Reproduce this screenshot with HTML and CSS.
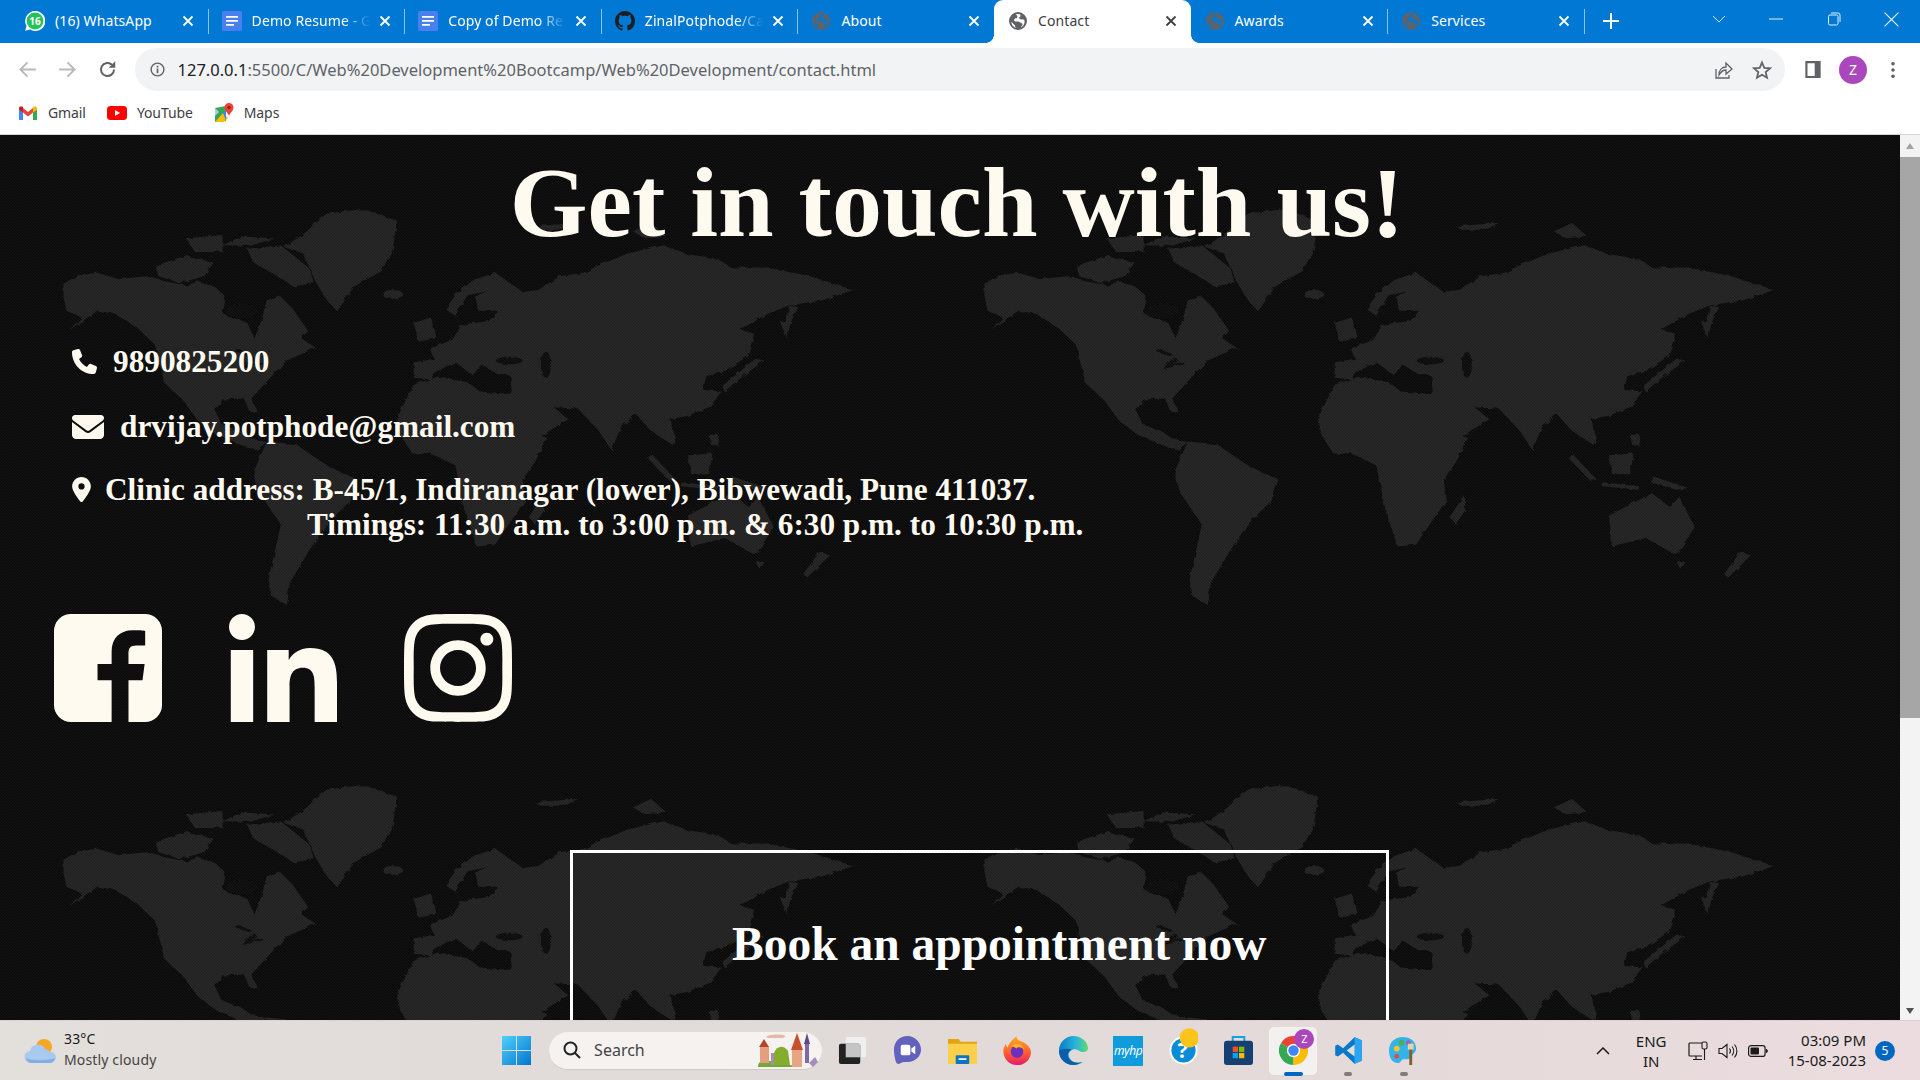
FILE: index.html
```html
<!DOCTYPE html>
<html lang="en">
<head>
<meta charset="utf-8">
<title>Contact</title>
<link rel="stylesheet" href="styles.css">
</head>
<body>
<svg class="defs" width="0" height="0" aria-hidden="true">
  <symbol id="globe" viewBox="0 0 16 16"><path fill-rule="evenodd" d="M8 0a8 8 0 1 0 0 16A8 8 0 0 0 8 0zM2 8.6 5.4 12v1l1.4 1.3A6.400 6.400 0 0 1 2 8.600zM10.700 13.800l.1-.800 1.200-1.500V10.500L8.500 8.500H5.600L4.300 7.300 5.500 5.500h1.600L7.500 3.500 6 2.100a6.400 6.400 0 0 1 4.100.1V4L8.700 5.200l1.200 1.300 3 .1.900 1A6.400 6.400 0 0 1 10.700 13.800z"/></symbol>
  <symbol id="tabx" viewBox="0 0 12 12"><path d="M1.500 1.500l9 9M10.500 1.500l-9 9" fill="none" stroke="currentColor" stroke-width="1.800"/></symbol>
  <symbol id="doc" viewBox="0 0 20 20"><rect width="20" height="20" rx="2" fill="#4a80ee"/><path d="M4 5h12v1.800H4zM4 9h12v1.800H4zM4 13h8v1.800H4z" fill="#fff"/></symbol>
</svg>

<header class="tabbar">
  <div class="tab">
    <svg class="fav" viewBox="0 0 20 20"><path d="M10 0a10 10 0 0 0-8.500 15L.2 19.800l4.900-1.300A10 10 0 1 0 10 0z" fill="#fff"/><circle cx="10" cy="10" r="8.400" fill="#25c25a"/><text x="10" y="13.500" class="fav-num">16</text></svg>
    <span class="tab-title">(16) WhatsApp</span><svg class="tab-x"><use href="#tabx"/></svg>
  </div>
  <div class="tab">
    <svg class="fav"><use href="#doc"/></svg>
    <span class="tab-title fade">Demo Resume - G</span><svg class="tab-x"><use href="#tabx"/></svg>
  </div>
  <div class="tab">
    <svg class="fav"><use href="#doc"/></svg>
    <span class="tab-title fade">Copy of Demo Re</span><svg class="tab-x"><use href="#tabx"/></svg>
  </div>
  <div class="tab">
    <svg class="fav gh" viewBox="0 0 16 16"><path fill="#1b1f23" d="M8 0C3.580 0 0 3.580 0 8c0 3.540 2.290 6.530 5.470 7.590.4.070.550-.170.550-.380 0-.190-.010-.820-.010-1.490-2.010.370-2.530-.490-2.690-.940-.090-.230-.480-.940-.820-1.130-.280-.150-.680-.520-.010-.530.630-.010 1.080.580 1.230.820.720 1.210 1.870.870 2.330.660.070-.520.280-.870.510-1.070-1.780-.2-3.640-.890-3.640-3.950 0-.870.310-1.590.820-2.150-.08-.2-.36-1.020.08-2.120 0 0 .670-.210 2.200.820.640-.180 1.320-.270 2-.270.680 0 1.360.090 2 .270 1.530-1.040 2.200-.820 2.200-.820.440 1.100.160 1.920.08 2.120.510.560.820 1.270.820 2.150 0 3.070-1.870 3.750-3.650 3.950.290.250.540.730.540 1.480 0 1.070-.010 1.930-.010 2.200 0 .210.150.460.550.380A8.013 8.013 0 0 0 16 8c0-4.420-3.580-8-8-8z"/></svg>
    <span class="tab-title fade">ZinalPotphode/Ca</span><svg class="tab-x"><use href="#tabx"/></svg>
  </div>
  <div class="tab nosep">
    <svg class="fav grey"><use href="#globe"/></svg>
    <span class="tab-title">About</span><svg class="tab-x"><use href="#tabx"/></svg>
  </div>
  <div class="tab active nosep">
    <svg class="fav grey"><use href="#globe"/></svg>
    <span class="tab-title">Contact</span><svg class="tab-x"><use href="#tabx"/></svg>
  </div>
  <div class="tab">
    <svg class="fav grey"><use href="#globe"/></svg>
    <span class="tab-title">Awards</span><svg class="tab-x"><use href="#tabx"/></svg>
  </div>
  <div class="tab">
    <svg class="fav grey"><use href="#globe"/></svg>
    <span class="tab-title">Services</span><svg class="tab-x"><use href="#tabx"/></svg>
  </div>
  <svg class="newtab" viewBox="0 0 16 16"><path d="M8 0v16M0 8h16" stroke="#fff" stroke-width="2"/></svg>
  <div class="winctl">
    <div class="wbtn"><svg class="wicon" viewBox="0 0 14 14"><path d="M1 4l6 6 6-6" fill="none" stroke="#cfe4f7" stroke-width="1"/></svg></div>
    <div class="wbtn"><svg class="wicon" viewBox="0 0 14 14"><path d="M0 7h14" stroke="#e6f1fb" stroke-width="1"/></svg></div>
    <div class="wbtn"><svg class="wicon" viewBox="0 0 14 14"><rect x="1.500" y="3" width="9.500" height="10" rx="1.500" fill="none" stroke="#e6f1fb"/><path d="M4 1h7a2 2 0 0 1 2 2v7" fill="none" stroke="#e6f1fb" stroke-width="1"/></svg></div>
    <div class="wbtn"><svg class="wicon big" viewBox="0 0 14 14"><path d="M.5.500l13 13M13.500.500l-13 13" stroke="#f2f8fd" stroke-width="1"/></svg></div>
  </div>
</header>

<nav class="toolbar">
  <div class="navbtn"><svg class="navicon" viewBox="0 0 16 16"><path d="M15 8H2M8 2 2 8l6 6" fill="none" stroke="#b7b9bc" stroke-width="1.600"/></svg></div>
  <div class="navbtn"><svg class="navicon" viewBox="0 0 16 16"><path d="M1 8h13M8 2l6 6-6 6" fill="none" stroke="#b7b9bc" stroke-width="1.600"/></svg></div>
  <div class="navbtn"><svg class="navicon" viewBox="0 0 16 16"><path d="M13.500 8a5.500 5.500 0 1 1-1.700-4" fill="none" stroke="#5f6368" stroke-width="1.700"/><path d="M14.500 1v5.500H9z" fill="#5f6368"/></svg></div>
  <div class="addr">
    <svg class="info" viewBox="0 0 16 16"><circle cx="8" cy="8" r="6.800" fill="none" stroke="#5f6368" stroke-width="1.500"/><path d="M7.100 7h1.800v5H7.100zM7.100 4h1.800v1.800H7.100z" fill="#5f6368"/></svg>
    <span class="url"><span class="host">127.0.0.1</span>:5500/C/Web%20Development%20Bootcamp/Web%20Development/contact.html</span>
    <svg class="addr-ic share" viewBox="0 0 20 20"><path d="M3 9v9h13v-3" fill="none" stroke="#5f6368" stroke-width="1.300"/><path d="M6 15c0-5 3-8 7-8V3l6 6-6 5v-4c-3 0-5 1.500-7 5z" fill="none" stroke="#5f6368" stroke-width="1.300"/></svg>
    <svg class="addr-ic star" viewBox="0 0 20 20"><path d="M10 2.500l2.300 5.300 5.700.5-4.300 3.800 1.300 5.600L10 14.800l-5 2.900 1.300-5.600L2 8.300l5.700-.5z" fill="none" stroke="#5f6368" stroke-width="1.800"/></svg>
  </div>
  <div class="tools">
    <div class="navbtn"><svg class="panel" viewBox="0 0 18 20"><path fill-rule="evenodd" d="M0 0h18v20H0zM2.500 2.500v15H11v-15z" fill="#5f6368"/></svg></div>
    <div class="navbtn"><span class="avatar">Z</span></div>
    <div class="navbtn"><svg class="dots" viewBox="0 0 6 20"><circle cx="3" cy="3" r="2" fill="#5f6368"/><circle cx="3" cy="10" r="2" fill="#5f6368"/><circle cx="3" cy="17" r="2" fill="#5f6368"/></svg></div>
  </div>
</nav>

<div class="bookmarks">
  <a class="bm">
    <svg class="bm-ic gm" viewBox="0 0 18 14"><path d="M0 2.500V14h4V6z" fill="#4285f4"/><path d="M18 2.500V14h-4V6z" fill="#34a853"/><path d="M4 2 9 6l5-4v4.500L9 10.500 4 6.500z" fill="#ea4335"/><path d="M0 2.500C0 .500 2.300-.500 4 1v5.500L0 3.500z" fill="#c5221f"/><path d="M18 2.500C18 .500 15.700-.500 14 1v5.500l4-3z" fill="#fbbc04"/></svg>
    <span>Gmail</span>
  </a>
  <a class="bm">
    <svg class="bm-ic yt" viewBox="0 0 20 14"><rect width="20" height="14" rx="3.500" fill="#f00"/><path d="M8 4l5.200 3L8 10z" fill="#fff"/></svg>
    <span>YouTube</span>
  </a>
  <a class="bm">
    <svg class="bm-ic mp" viewBox="0 0 20 20"><path d="M1 5l11-2v15L1 19z" fill="#34a853"/><path d="M1 19 9 10l5 5-4 4z" fill="#fbbc04"/><path d="M9 10l3-3v11z" fill="#4285f4"/><path d="M1 5l4 4-4 4z" fill="#aecbfa"/><path d="M15 0a4.500 4.500 0 0 0-4.500 4.500c0 3 3 5 4.500 8 1.500-3 4.500-5 4.500-8A4.500 4.500 0 0 0 15 0z" fill="#ea4335"/><circle cx="15" cy="4.500" r="1.600" fill="#a50e0e"/></svg>
    <span>Maps</span>
  </a>
</div>

<div class="viewport">
  <main class="page">
    <h1 class="headline">Get in touch with us!</h1>
    <section class="contacts">
      <p class="line phone-line">
        <svg class="ic-phone" viewBox="0 0 512 512"><path d="M164.900 24.600c-7.700-18.600-28-28.500-47.400-23.200l-88 24C12.100 30.200 0 46 0 64C0 311.400 200.600 512 448 512c18 0 33.800-12.100 38.600-29.500l24-88c5.300-19.400-4.600-39.700-23.200-47.400l-96-40c-16.300-6.800-35.200-2.100-46.300 11.600L304.700 368C234.300 334.700 177.300 277.700 144 207.300L193.300 167c13.700-11.200 18.400-30 11.600-46.300l-40-96z"/></svg>
        <span>9890825200</span>
      </p>
      <p class="line mail-line">
        <svg class="ic-mail" viewBox="0 64 512 384"><path d="M48 64C21.500 64 0 85.500 0 112c0 15.100 7.100 29.300 19.200 38.400L236.800 313.600c11.400 8.500 27 8.500 38.400 0L492.800 150.400c12.100-9.100 19.200-23.300 19.200-38.400c0-26.500-21.500-48-48-48H48zM0 176V384c0 35.300 28.700 64 64 64H448c35.300 0 64-28.700 64-64V176L294.400 339.200c-22.800 17.100-54 17.100-76.800 0L0 176z"/></svg>
        <span>drvijay.potphode@gmail.com</span>
      </p>
      <p class="line addr-line">
        <svg class="ic-pin" viewBox="0 0 384 512"><path d="M215.700 499.200C267 435 384 279.400 384 192C384 86 298 0 192 0S0 86 0 192c0 87.400 117 243 168.300 307.200c12.300 15.300 35.100 15.300 47.400 0zM192 128a64 64 0 1 1 0 128 64 64 0 1 1 0-128z"/></svg>
        <span>Clinic address: B-45/1, Indiranagar (lower), Bibwewadi, Pune 411037.</span>
      </p>
      <p class="line timing">Timings: 11:30 a.m. to 3:00 p.m. &amp; 6:30 p.m. to 10:30 p.m.</p>
    </section>
    <section class="socials">
      <svg class="social" viewBox="0 32 448 448"><path d="M70 32H378a70 70 0 0 1 70 70V410a70 70 0 0 1-70 70H309V306.500h58.200l8.700-67.600h-67v-43.200c0-19.600 5.400-32.900 33.500-32.900h35.800v-60.500c-6.200-.8-27.400-2.700-52.200-2.700-51.600 0-87 31.500-87 89.400v49.900h-58.400v67.600h58.400V480H70a70 70 0 0 1-70-70V102a70 70 0 0 1 70-70z"/></svg>
      <svg class="social" viewBox="0 0 448 448"><path d="M100.280 448H7.400V148.900h92.880zM53.790 108.100C24.090 108.100 0 83.500 0 53.800a53.790 53.790 0 0 1 107.580 0c0 29.700-24.100 54.300-53.790 54.300zM447.900 448h-92.680V302.400c0-34.700-.7-79.200-48.290-79.200-48.290 0-55.690 37.700-55.690 76.700V448h-92.780V148.900h89.080v40.800h1.300c12.400-23.500 42.690-48.300 87.880-48.300 94 0 111.280 61.900 111.280 142.300V448z"/></svg>
      <svg class="social" viewBox="0 32 448 448"><path d="M224.100 141c-63.600 0-114.900 51.300-114.900 114.900s51.300 114.900 114.900 114.900S339 319.500 339 255.900 287.700 141 224.100 141zm0 189.600c-41.100 0-74.700-33.500-74.700-74.700s33.500-74.700 74.700-74.700 74.700 33.500 74.700 74.700-33.600 74.700-74.700 74.700zm146.400-194.300c0 14.900-12 26.800-26.800 26.800-14.900 0-26.800-12-26.800-26.800s12-26.800 26.800-26.800 26.800 12 26.800 26.800zm76.100 27.200c-1.700-35.900-9.900-67.700-36.200-93.900-26.200-26.200-58-34.400-93.900-36.200-37-2.100-147.900-2.100-184.900 0-35.800 1.700-67.600 9.900-93.900 36.100s-34.400 58-36.200 93.900c-2.100 37-2.100 147.900 0 184.900 1.700 35.900 9.900 67.700 36.200 93.900s58 34.400 93.900 36.200c37 2.100 147.900 2.100 184.900 0 35.900-1.700 67.700-9.900 93.900-36.200 26.200-26.200 34.400-58 36.200-93.900 2.100-37 2.100-147.800 0-184.800zM398.800 388c-7.800 19.600-22.900 34.700-42.600 42.600-29.500 11.700-99.500 9-132.100 9s-102.700 2.600-132.100-9c-19.600-7.800-34.700-22.900-42.600-42.600-11.700-29.500-9-99.500-9-132.100s-2.600-102.700 9-132.100c7.800-19.600 22.900-34.700 42.600-42.600 29.500-11.700 99.500-9 132.100-9s102.700-2.600 132.100 9c19.600 7.800 34.700 22.900 42.600 42.600 11.700 29.500 9 99.500 9 132.100s2.700 102.700-9 132.100z"/></svg>
    </section>
    <section class="appt">
      <h2 class="appt-title">Book an appointment now</h2>
    </section>
  </main>
  <aside class="scrollbar">
    <svg class="sb-arrow" viewBox="0 0 10 8"><path d="M5 1l4 6H1z" fill="#a3a3a3"/></svg>
    <div class="sb-track"><div class="sb-thumb"></div></div>
    <svg class="sb-arrow" viewBox="0 0 10 8"><path d="M5 7 9 1H1z" fill="#505050"/></svg>
  </aside>
</div>

<footer class="taskbar">
  <div class="weather">
    <svg class="wx" viewBox="0 0 32 26"><circle cx="20" cy="9" r="8" fill="#f7a823"/><path d="M7 25a6 6 0 0 1-1-12 8 8 0 0 1 15-2 6.500 6.500 0 0 1 5 3 5.500 5.500 0 0 1 1 11z" fill="#a9c9ee"/><path d="M2 20c6 3 20 3 29 0-1 3-3 5-5 5H7c-2 0-4-2-5-5z" fill="#7eaee2"/></svg>
    <div class="wx-text"><span class="wx-temp">33°C</span><span class="wx-desc">Mostly cloudy</span></div>
  </div>
  <div class="tb-cell start">
    <svg class="tb-start" viewBox="0 0 29 29"><defs><linearGradient id="wing" x1="0" y1="0" x2="1" y2="1"><stop offset="0" stop-color="#4fd2fb"/><stop offset="1" stop-color="#0474cf"/></linearGradient></defs><path fill="url(#wing)" d="M0 0h14v14H0zM15 0h14v14H15zM0 15h14v14H0zM15 15h14v14H15z"/></svg>
  </div>
  <div class="search">
    <svg class="search-ic" viewBox="0 0 18 18"><circle cx="7.500" cy="7.500" r="6" fill="none" stroke="#222" stroke-width="2"/><path d="M12 12l5 5" stroke="#222" stroke-width="2"/></svg>
    <span class="search-text">Search</span>
    <svg class="castle" viewBox="0 0 62 34"><path d="M10 4c4-3 14-3 20-1l-3 2H12z" fill="#e2b9a5"/><path d="M2 34c0-6 6-8 12-6l30 6z" fill="#76a73a"/><rect x="4" y="14" width="9" height="16" fill="#e39f7e"/><path d="M3 14l5-8 5 8z" fill="#b4452c"/><rect x="15" y="20" width="14" height="12" fill="#a78bb4"/><path d="M18 20c3-8 10-8 14-2l2 14H18z" fill="#86ac2e"/><rect x="36" y="16" width="10" height="18" fill="#e8a583"/><path d="M35 17l6-17 6 17z" fill="#c84f2b"/><rect x="49" y="10" width="4" height="20" fill="#7e6aa2"/><path d="M48 11l3-11 3 11z" fill="#5c4b85"/><path d="M53 30l6-6 3 5-5 5z" fill="#a28fc0"/></svg>
  </div>
  <div class="tb-icons">
    <div class="tb-cell"><svg class="tb-ic" viewBox="0 0 30 30"><rect x="8" y="1" width="21" height="21" rx="2" fill="#efefef"/><rect x="1" y="8" width="22" height="21" rx="2" fill="#222"/><rect x="8" y="8" width="15" height="14" fill="#c5c5c5"/></svg></div>
    <div class="tb-cell"><svg class="tb-ic" viewBox="0 0 30 30"><path d="M15 0C7 0 1 6 1 14c0 5 1 9 2 13 1 2 3 3 5 1 2-1 4-1 7-1 8 0 14-6 14-13S23 0 15 0z" fill="#6262bd"/><rect x="8" y="9" width="10" height="11" rx="2" fill="#fff"/><path d="M19 13l4-3v9l-4-3z" fill="#fff"/></svg></div>
    <div class="tb-cell"><svg class="tb-ic" viewBox="0 0 30 30"><path d="M0 3h11l2 3h17v23H0z" fill="#e2a50f"/><path d="M0 8h30v21H0z" fill="#fdd04c"/><rect x="8" y="20" width="14" height="9" rx="1" fill="#0d74c4"/><rect x="11" y="23" width="8" height="1.800" fill="#fff"/></svg></div>
    <div class="tb-cell"><svg class="tb-ic" viewBox="0 0 30 30"><defs><linearGradient id="ff" x1="0" y1="0" x2="0" y2="1"><stop offset="0" stop-color="#ffb020"/><stop offset=".6" stop-color="#ff5a30"/><stop offset="1" stop-color="#e3196e"/></linearGradient></defs><path d="M15 30A14 14 0 0 1 3 8c0 2 1 3 2 4 1-5 5-8 9-12 0 4 3 5 6 6 5 2 9 7 9 11a14 14 0 0 1-14 13z" fill="url(#ff)"/><circle cx="14.500" cy="16" r="6.500" fill="#6b2fc0"/><path d="M9 10c4-3 11-2 13 4-3-3-7-3-8-1z" fill="#ffb020"/></svg></div>
    <div class="tb-cell"><svg class="tb-ic" viewBox="0 0 30 30"><defs><linearGradient id="edg" x1="0" y1="0" x2="1" y2="0"><stop offset="0" stop-color="#0b7bc8"/><stop offset=".6" stop-color="#2bb6d8"/><stop offset="1" stop-color="#5fdc6a"/></linearGradient></defs><path d="M15 0A15 15 0 0 0 0 15c0 9 7 15 15 15 4 0 7-1 10-3-6 2-14 0-15-7 0-5 6-8 10-5 3 2 9 3 10-2C30 6 23 0 15 0z" fill="url(#edg)"/><path d="M0 15c0 9 7 15 15 15 3 0 6-1 9-3-6 2-14 0-15-7 0-3 2-5 4-6-6-2-12 0-13 1z" fill="#0b5ea8"/></svg></div>
    <div class="tb-cell"><div class="tb-hp">myhp</div></div>
    <div class="tb-cell"><svg class="tb-ic tall" viewBox="0 0 30 38"><circle cx="15" cy="23" r="14.500" fill="#fff"/><circle cx="15" cy="23" r="12.500" fill="#0c8bd6"/><text x="14" y="31" class="tb-q">?</text><ellipse cx="21" cy="10" rx="10" ry="10" fill="#fcc419"/></svg></div>
    <div class="tb-cell"><svg class="tb-ic" viewBox="0 0 30 30"><path d="M9 6V1h12v5" fill="none" stroke="#12a3e3" stroke-width="2"/><rect x="0" y="5" width="30" height="25" rx="3" fill="#163f72"/><rect x="9" y="11" width="5.500" height="5.500" fill="#f25022"/><rect x="15.500" y="11" width="5.500" height="5.500" fill="#7fba00"/><rect x="9" y="17.500" width="5.500" height="5.500" fill="#00a4ef"/><rect x="15.500" y="17.500" width="5.500" height="5.500" fill="#ffb900"/></svg></div>
    <div class="tb-cell chrome-cell">
      <svg class="tb-ic" viewBox="0 0 24 24"><path d="M12 12 1.600 6A12 12 0 0 1 22.400 6z" fill="#ea4335"/><path d="M12 12v12A12 12 0 0 1 1.600 6z" fill="#34a853"/><path d="M12 12 22.400 6A12 12 0 0 1 12 24z" fill="#fbbc04"/><circle cx="12" cy="12" r="5.500" fill="#fff"/><circle cx="12" cy="12" r="4.300" fill="#4285f4"/></svg>
      <span class="chrome-z">Z</span>
      <span class="run active-run"></span>
    </div>
    <div class="tb-cell">
      <svg class="tb-ic" viewBox="0 0 24 24"><path d="M17 1 7.500 10.200 3.200 7 1 8v8l2.200 1 4.300-3.200L17 23l6-2.500v-17z" fill="#0a78c9"/><path d="M17 1v22l6-2.500v-17z" fill="#2aa5f2"/><path d="M17 7l-6.500 5 6.500 5z" fill="#e3dedc"/></svg>
      <span class="run"></span>
    </div>
    <div class="tb-cell">
      <svg class="tb-ic" viewBox="0 0 30 30"><path d="M14 1C6 1 0 7 0 15c0 7 3 13 9 13 4 0 3-4 6-4 2 0 7 1 8-3 1-3 5-3 5-8C28 5 22 1 14 1z" fill="#33b4e8"/><circle cx="8" cy="13" r="3" fill="#f4c430"/><circle cx="13" cy="7" r="3" fill="#4caf50"/><circle cx="8" cy="21" r="2.500" fill="#e24a4a"/><circle cx="20" cy="7" r="2.500" fill="#9d5cc8"/><rect x="21" y="13" width="3" height="17" fill="#8a5a2b"/><rect x="19.500" y="8" width="6" height="6" fill="#e9d3a5"/></svg>
      <span class="run"></span>
    </div>
  </div>
  <div class="tray">
    <svg class="tray-chev" viewBox="0 0 14 8"><path d="M1 7l6-6 6 6" fill="none" stroke="#1a1a1a" stroke-width="1.500"/></svg>
    <div class="lang"><span>ENG</span><span>IN</span></div>
    <svg class="tray-ic" viewBox="0 0 20 20"><path d="M14 2H2a1 1 0 0 0-1 1v11a1 1 0 0 0 1 1h12" fill="none" stroke="#1a1a1a" stroke-width="1.200"/><path d="M8 15v3M5 18.500h9" stroke="#1a1a1a" stroke-width="1.200"/><rect x="14" y="1" width="5" height="7" rx="1.500" fill="none" stroke="#1a1a1a" stroke-width="1.100"/><path d="M16.500 8v11" stroke="#1a1a1a" stroke-width="1.100"/></svg>
    <svg class="tray-ic" viewBox="0 0 20 20"><path d="M1 7.500v5h3l5 4V3.500l-5 4z" fill="none" stroke="#1a1a1a" stroke-width="1.100"/><path d="M11.500 7.500a4 4 0 0 1 0 5M14 5.500a7 7 0 0 1 0 9M16.500 3.500a10 10 0 0 1 0 13" fill="none" stroke="#1a1a1a" stroke-width="1.100"/></svg>
    <svg class="tray-ic" viewBox="0 0 20 12"><rect x=".6" y=".6" width="16.500" height="10.800" rx="2.500" fill="none" stroke="#1a1a1a" stroke-width="1.200"/><rect x="2.500" y="2.500" width="8.500" height="7" rx="1" fill="#1a1a1a"/><path d="M18 4v4c1.200-.2 1.800-1 1.800-2S19.200 4.200 18 4z" fill="#1a1a1a"/></svg>
    <div class="clock"><span>03:09 PM</span><span>15-08-2023</span></div>
    <span class="notif">5</span>
  </div>
</footer>
</body>
</html>
```
FILE: styles.css
```css
* { box-sizing: border-box; }
html, body { margin: 0; padding: 0; }
body {
  width: 1920px;
  height: 1080px;
  overflow: hidden;
  display: flex;
  flex-direction: column;
  font-family: "Noto Sans", "Open Sans", sans-serif;
  background: #fff;
}
.defs { display: block; height: 0; }

/* tab strip */
.tabbar {
  height: 43px;
  flex: none;
  display: flex;
  align-items: stretch;
  padding-left: 11px;
  background: #0078d4;
  color: #fff;
}
.tab {
  position: relative;
  width: 196.600px;
  flex: none;
  display: flex;
  align-items: center;
  padding-bottom: 2px;
  font-size: 14px;
}
.tab::after {
  content: "";
  position: absolute;
  right: -1px;
  top: 9px;
  height: 25px;
  width: 1px;
  background: rgba(255, 255, 255, .55);
}
.tab.nosep::after { display: none; }
.tab.active {
  background: #fff;
  color: #3c4043;
  border-radius: 9px 9px 0 0;
}
.tab.active::before,
.tab.active::after {
  content: "";
  display: block;
  position: absolute;
  top: auto;
  bottom: 0;
  width: 8px;
  height: 8px;
  background: radial-gradient(circle at 0 0, #0078d4 7.500px, #fff 8px);
}
.tab.active::before { left: -8px; }
.tab.active::after {
  right: -8px;
  background: radial-gradient(circle at 100% 0, #0078d4 7.500px, #fff 8px);
}
.fav {
  width: 20px;
  height: 20px;
  flex: none;
  margin-left: 14px;
  fill: currentColor;
}
.fav.grey { color: #5f6368; width: 18px; height: 18px; margin: 0 1px 0 15px; }
.fav-num { font: 700 10px "Noto Sans", sans-serif; fill: #fff; text-anchor: middle; }
.tab-title {
  width: 122px;
  flex: none;
  margin-left: 10px;
  white-space: nowrap;
  letter-spacing: .1px;
}
.tab-title.fade {
  -webkit-mask-image: linear-gradient(90deg, #000 74%, transparent 97%);
  mask-image: linear-gradient(90deg, #000 74%, transparent 97%);
}
.tab-x { width: 12px; height: 12px; flex: none; margin-left: 5px; }
.newtab { width: 16px; height: 16px; flex: none; margin: 13px 0 0 19px; }
.winctl { margin-left: auto; display: flex; }
.wbtn {
  width: 57.500px;
  height: 38px;
  display: flex;
  align-items: center;
  justify-content: center;
}
.wicon { width: 14px; height: 14px; }
.wicon.big { width: 15px; height: 15px; }

/* toolbar */
.toolbar {
  height: 52px;
  flex: none;
  display: flex;
  align-items: center;
  padding: 1px 0 0 7px;
  background: #fff;
}
.navbtn {
  width: 40px;
  height: 40px;
  flex: none;
  display: flex;
  align-items: center;
  justify-content: center;
}
.navicon { width: 19px; height: 19px; }
.addr {
  width: 1650px;
  height: 43px;
  margin-left: 8px;
  flex: none;
  display: flex;
  align-items: center;
  padding-left: 15px;
  border-radius: 22px;
  background: #f1f3f4;
}
.info { width: 15px; height: 15px; flex: none; }
.url {
  margin-left: 12.500px;
  font-size: 16.500px;
  color: #5f6368;
  white-space: nowrap;
}
.host { color: #202124; }
.addr-ic { width: 20px; height: 20px; flex: none; }
.share { margin-left: auto; }
.star { margin: 0 13px 0 19px; }
.tools { display: flex; margin-left: 8px; }
.panel { width: 18px; height: 17px; }
.avatar {
  width: 28px;
  height: 28px;
  border-radius: 50%;
  background: #ab47bc;
  color: #fff;
  font-size: 14px;
  display: flex;
  align-items: center;
  justify-content: center;
}
.dots { width: 6px; height: 18px; }

/* bookmarks */
.bookmarks {
  height: 40px;
  flex: none;
  display: flex;
  align-items: center;
  padding: 0 0 4px 19px;
  background: #fff;
  border-bottom: 1px solid #d5d5d5;
  font-size: 14px;
  color: #3c4043;
  letter-spacing: -.1px;
}
.bm { display: flex; align-items: center; margin-right: 21px; }
.bm-ic { flex: none; margin-right: 11px; }
.gm { width: 18px; height: 14px; }
.yt { width: 20px; height: 14px; margin-right: 10px; }
.mp { width: 20px; height: 20px; margin-right: 10px; }

/* page */
.viewport { flex: none; height: 885px; display: flex; }
.page {
  flex: 1;
  overflow: hidden;
  font-family: "Liberation Serif", "Times New Roman", serif;
  color: #fffaf0;
  background-color: #0b0b0b;
  background-image:
    url("data:image/svg+xml,%3Csvg xmlns='http://www.w3.org/2000/svg' width='3' height='3' shape-rendering='crispEdges'%3E%3Cg fill='%23fff' fill-opacity='.035'%3E%3Crect width='1' height='1'/%3E%3Crect x='1' y='1' width='1' height='1'/%3E%3Crect x='2' y='2' width='1' height='1'/%3E%3C/g%3E%3C/svg%3E"),
    url("data:image/svg+xml,%3Csvg xmlns='http://www.w3.org/2000/svg' width='921' height='576' viewBox='0 0 921 576'%3E%3Cfilter id='j' x='-5%25' y='-5%25' width='110%25' height='110%25'%3E%3CfeTurbulence type='fractalNoise' baseFrequency='.14' numOctaves='2' seed='4'/%3E%3CfeDisplacementMap in='SourceGraphic' scale='4'/%3E%3C/filter%3E%3Cg filter='url(%23j)'%3E%3Cg transform='translate(39 0) scale(.6122 .3444)'%3E%3Cg fill='%23212121'%3E%3Cpath d='M40 432L62 408 95 400 130 418 175 410 205 425 240 436 262 425 290 445 305 470 300 520 340 545 352 590 362 545 372 480 395 470 415 505 440 570 428 590 452 618 405 655 385 690 360 740 347 765 357 805 343 800 335 765 300 768 288 800 298 840 330 862 345 880 372 892 355 915 330 900 290 870 260 830 235 770 205 720 195 650 190 610 160 560 125 520 95 510 80 530 50 565 70 530 45 510 40 470Z'/%3E%3Cpath d='M340 330L395 320 440 385 450 430 415 440 380 400 350 370ZM330 295L385 300 345 322 300 320ZM190 380L240 350 285 370 270 410 230 430 195 410ZM240 300L300 290 300 340 255 340Z'/%3E%3Cpath d='M400 325L430 290 470 228 530 215 585 250 578 330 560 395 515 440 487 512 470 480 450 420 432 345Z'/%3E%3Cellipse cx='578' cy='463' rx='17' ry='13'/%3E%3Cpath d='M372 890L420 898 470 960 520 1000 510 1060 470 1130 440 1210 410 1300 405 1365 380 1340 375 1290 395 1130 360 1040 350 980Z'/%3E%3Cpath d='M585 820L612 725 650 702 700 718 720 745 770 752 790 810 805 865 830 880 810 950 790 1000 795 1060 760 1150 745 1190 715 1195 695 1090 680 960 640 925 610 925 590 870Z'/%3E%3Cpath d='M612 660L645 650 638 620 675 595 690 550 735 540 750 510 718 510 712 470 730 455 700 465 680 525 664 505 682 460 710 420 745 400 790 455 815 450 850 410 890 400 910 382 960 345 1020 320 1055 345 1110 360 1130 385 1190 385 1260 410 1330 450 1280 480 1225 495 1190 520 1145 565 1170 580 1160 640 1115 690 1090 700 1085 740 1115 745 1095 790 1060 815 1030 825 1040 880 1035 900 1000 860 975 810 950 850 935 915 915 860 880 795 835 790 820 760 865 825 810 885 780 810 762 770 772 745 770 700 745 690 720 665 710 700 680 660 645 690 640 710 612 705Z'/%3E%3Cpath d='M612 545L640 530 650 590 620 600ZM1225 495L1240 500 1215 590ZM1210 540L1228 545 1222 590ZM1170 650L1185 655 1150 700 1120 745 1115 730ZM1000 925L1040 1000 1030 1005 995 940ZM1060 930L1100 925 1095 985 1065 985ZM1048 1008L1110 1020 1108 1030 1048 1020ZM1130 990L1190 1025 1170 1030 1130 1010ZM1095 870L1110 870 1112 905 1098 900ZM1060 1105L1130 1040 1160 1080 1175 1050 1200 1140 1170 1220 1120 1170 1065 1195ZM1170 1240L1185 1240 1178 1262ZM1275 1210L1292 1220 1255 1285 1248 1275ZM825 1040L825 1090 810 1130 800 1110ZM810 265L880 255 860 275 820 275ZM970 280L1000 255 1025 295 990 300Z'/%3E%3C/g%3E%3Cg fill='%230c0c0c'%3E%3Cellipse cx='768' cy='655' rx='22' ry='11'/%3E%3Cellipse cx='828' cy='667' rx='8' ry='38'/%3E%3Cpath d='M322 625L345 640M352 648L340 672 365 662' fill='none' stroke='%230c0c0c' stroke-width='8'/%3E%3Cellipse cx='332' cy='510' rx='26' ry='22'/%3E%3C/g%3E%3C/g%3E%3C/g%3E%3C/svg%3E");
  background-size: 3px 3px, 921px 576px;
}
.headline {
  margin: 15px 0 0;
  padding-left: 14px;
  text-align: center;
  font-size: 100px;
  font-weight: 700;
  line-height: 106px;
}
.contacts { margin: 87px 0 0 72px; font-weight: 700; font-size: 31.250px; }
.line { margin: 0; display: flex; align-items: center; line-height: 37px; white-space: nowrap; }
.phone-line { gap: 16px; }
.mail-line { gap: 16px; margin-top: 28px; }
.addr-line { gap: 14px; margin-top: 26px; }
.timing { padding-left: 235px; line-height: 36px; margin-top: -1px; }
.ic-phone, .ic-mail, .ic-pin { fill: #fffaf0; flex: none; }
.ic-phone { width: 25px; height: 25px; }
.ic-mail { width: 32px; height: 24px; }
.ic-pin { width: 19px; height: 25px; }
.socials { display: flex; gap: 67px; margin: 71px 0 0 54px; }
.social { width: 108px; height: 108px; fill: #fffaf0; flex: none; }
.appt {
  width: 819px;
  height: 420px;
  margin: 128px 0 0 570px;
  padding-left: 159px;
  border: 3px solid #fff;
}
.appt-title {
  margin: 64px 0 0;
  font-size: 47.500px;
  font-weight: 700;
  line-height: 55px;
  color: #fff;
  white-space: nowrap;
}

/* scrollbar */
.scrollbar {
  width: 20px;
  flex: none;
  display: flex;
  flex-direction: column;
  align-items: center;
  background: #f3f3f3;
}
.sb-arrow { width: 10px; height: 8px; margin: 7px 0 5px; flex: none; }
.sb-track { flex: 1; width: 100%; }
.sb-thumb { width: 100%; height: 561px; margin-top: 2px; background: #a6a6a6; }

/* taskbar */
.taskbar {
  height: 60px;
  flex: none;
  display: flex;
  align-items: center;
  border-top: 1px solid #d9d3d1;
  background: linear-gradient(90deg, #e3dfdb 0%, #e0dad8 40%, #e4dad9 70%, #ecdcdf 100%);
  color: #1a1a1a;
}
.weather { width: 489px; flex: none; display: flex; align-items: center; padding-left: 24px; }
.wx { width: 32px; height: 26px; flex: none; }
.wx-text { display: flex; flex-direction: column; margin: -3px 0 0 8px; font-size: 14px; line-height: 21px; letter-spacing: .15px; }
.wx-desc { color: #444; }
.tb-cell {
  position: relative;
  width: 55.100px;
  height: 48px;
  flex: none;
  display: flex;
  align-items: center;
  justify-content: center;
}
.tb-start { width: 29px; height: 29px; }
.search {
  width: 273px;
  height: 38px;
  margin-left: 5px;
  flex: none;
  display: flex;
  align-items: center;
  padding-left: 14px;
  border-radius: 19px;
  background: #f5f2f0;
  border-bottom: 1px solid #cfcac7;
}
.search-ic { width: 18px; height: 18px; flex: none; }
.search-text { margin-left: 13px; font-size: 16px; color: #444; }
.castle { width: 62px; height: 34px; margin-left: auto; margin-right: 4px; flex: none; }
.tb-icons { display: flex; margin-left: 3px; }
.tb-ic { width: 29px; height: 29px; flex: none; }
.tb-ic.tall { height: 37px; margin-top: -8px; }
.tb-hp {
  width: 30px;
  height: 30px;
  background: #0f9bdc;
  color: #fff;
  font-size: 12px;
  font-style: italic;
  display: flex;
  align-items: center;
  justify-content: center;
  letter-spacing: -.5px;
}
.tb-q { font: 700 22px "Noto Sans", sans-serif; fill: #fff; text-anchor: middle; }
.chrome-cell { background: #f3f1ef; border-radius: 5px; width: 48px; margin: 0 3.550px; }
.chrome-z {
  position: absolute;
  top: 2px;
  left: 25px;
  width: 20px;
  height: 20px;
  border-radius: 50%;
  background: #ab47bc;
  color: #fff;
  font-size: 11px;
  display: flex;
  align-items: center;
  justify-content: center;
}
.run {
  position: absolute;
  bottom: -1px;
  left: 50%;
  width: 8px;
  height: 4px;
  margin-left: -4px;
  border-radius: 2px;
  background: #7d7d7d;
}
.active-run { width: 19px; margin-left: -9.500px; background: #0067c0; }
.tray { margin-left: auto; display: flex; align-items: center; padding-right: 25px; }
.tray-chev { width: 14px; height: 8px; flex: none; }
.lang {
  width: 34px;
  margin-left: 24px;
  display: flex;
  flex-direction: column;
  align-items: center;
  font-size: 15px;
  line-height: 20px;
}
.tray-ic { width: 20px; height: 20px; flex: none; margin-left: 10px; }
.lang + .tray-ic { margin-left: 20px; }
.clock {
  margin: -2px 0 0 19.500px;
  display: flex;
  flex-direction: column;
  align-items: flex-end;
  font-size: 15px;
  line-height: 20px;
}
.notif {
  width: 20px;
  height: 20px;
  margin-left: 9px;
  border-radius: 50%;
  background: #0067c0;
  color: #fff;
  font-size: 12px;
  display: flex;
  align-items: center;
  justify-content: center;
}
```
